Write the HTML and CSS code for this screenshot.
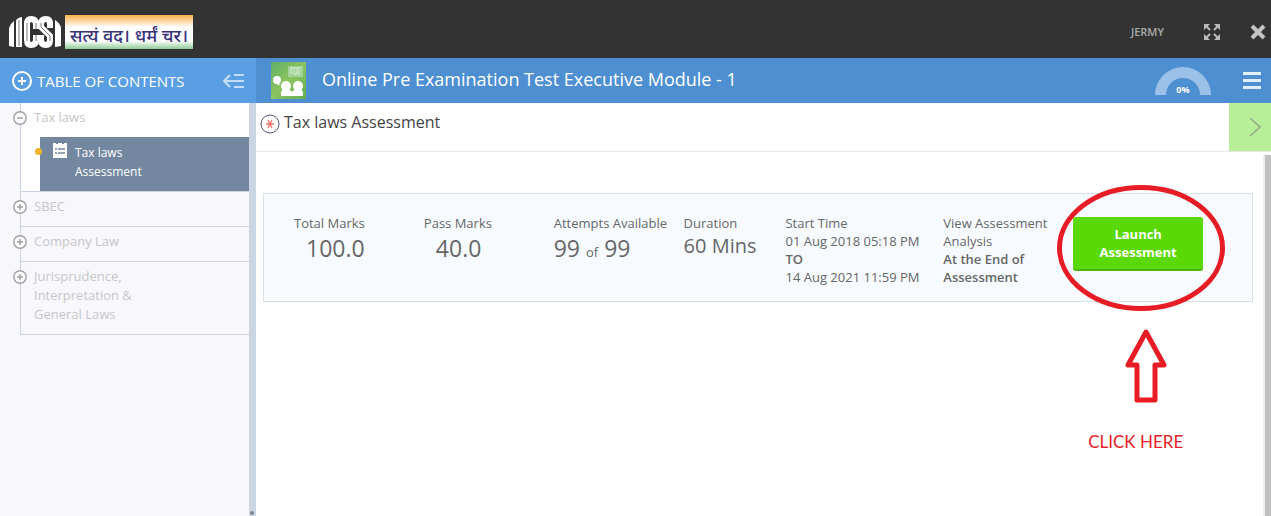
FILE: index.html
```html
<!DOCTYPE html>
<html lang="en">
<head>
    <meta charset="UTF-8">
    <meta name="viewport" content="width=device-width, initial-scale=1.0">
    <title>Online Pre Examination Test</title>
    <link rel="stylesheet" href="styles.css">
</head>
<body>
    <header class="topbar">
        <svg class="logo" viewBox="0 0 54 34" aria-hidden="true">
            <g fill="#fff">
                <path d="M1 13Q2 9 6 6V32L1 31Z"/>
                <path d="M8 5Q11 2 14 2V32H8Z"/>
                <path d="M47 5Q52 8 53 13V31L47 32Z"/>
            </g>
            <g fill="none" stroke="#fff" stroke-width="6">
                <path d="M28 14V9Q28 4 23 4Q19 4 19 9V25Q19 30 23 30Q28 30 28 25V20"/>
                <path d="M42 13V9Q42 4 38 4Q33 4 33 9V12L42 21V25Q42 30 38 30Q33 30 33 25V20"/>
            </g>
            <path fill="none" stroke="#777" d="M11 5V31M19 8V26M28 8V14M28 20V26M33 8V12L42 21V26"/>
        </svg>
        <span class="motto" lang="hi">सत्यं वद। धर्मं चर।</span>
        <span class="user">JERMY</span>
        <button class="icon-btn fullscreen" aria-label="Full screen">
            <svg width="16" height="16" viewBox="0 0 16 16" fill="#bbb" stroke="#bbb" stroke-width="2">
                <path stroke="none" d="M0 0H6L0 6Z M16 0V6L10 0Z M0 16V10L6 16Z M16 16H10L16 10Z"/>
                <path d="M2 2L6 6 M14 2L10 6 M2 14L6 10 M14 14L10 10"/>
            </svg>
        </button>
        <button class="icon-btn" aria-label="Close">
            <svg width="16" height="16" viewBox="0 0 16 16" stroke="#c4c4c4" stroke-width="4"><path d="M2 2L14 14 M14 2L2 14"/></svg>
        </button>
    </header>

    <div class="layout">
        <aside class="sidebar">
            <div class="toc-header">
                <svg width="20" height="20" viewBox="0 0 20 20" fill="none" stroke="#fff" stroke-width="2"><circle cx="10" cy="10" r="9"/><path d="M10 6V14 M6 10H14"/></svg>
                <h2>TABLE OF CONTENTS</h2>
                <button class="icon-btn" aria-label="Collapse contents">
                    <svg width="22" height="16" viewBox="0 0 22 16" fill="none" stroke="#c5ddf6" stroke-width="2"><path d="M11 2H21 M1 8H21 M11 14H21"/><path d="M7 2L1 8L7 14"/></svg>
                </button>
            </div>
            <ul class="toc">
                <li class="open">
                    <button class="toggle" aria-label="Collapse Tax laws">
                        <svg width="14" height="14" viewBox="0 0 14 14" fill="#fafafc" stroke="#a0a0a0" stroke-width="1.4"><circle cx="7" cy="7" r="6.2"/><path d="M4 7H10"/></svg>
                    </button>
                    <a href="#tax" class="topic">Tax laws</a>
                    <a href="#assessment" class="lesson">
                        <span class="dot"></span>
                        <svg width="14" height="15" viewBox="0 0 14 15"><path fill="#fff" d="M0 0H3V1H5V0H9V1H11V0H14V15H0Z"/><path stroke="#7388a0" stroke-width="1.6" d="M2 6H4 M5 6H12 M2 10H4 M5 10H12"/></svg>
                        <span class="lesson-name">Tax laws Assessment</span>
                    </a>
                </li>
                <li>
                    <button class="toggle" aria-label="Expand SBEC">
                        <svg width="14" height="14" viewBox="0 0 14 14" fill="#fafafc" stroke="#a0a0a0" stroke-width="1.4"><circle cx="7" cy="7" r="6.2"/><path d="M4 7H10 M7 4V10"/></svg>
                    </button>
                    <a href="#sbec" class="topic">SBEC</a>
                </li>
                <li>
                    <button class="toggle" aria-label="Expand Company Law">
                        <svg width="14" height="14" viewBox="0 0 14 14" fill="#fafafc" stroke="#a0a0a0" stroke-width="1.4"><circle cx="7" cy="7" r="6.2"/><path d="M4 7H10 M7 4V10"/></svg>
                    </button>
                    <a href="#company" class="topic">Company Law</a>
                </li>
                <li>
                    <button class="toggle" aria-label="Expand Jurisprudence">
                        <svg width="14" height="14" viewBox="0 0 14 14" fill="#fafafc" stroke="#a0a0a0" stroke-width="1.4"><circle cx="7" cy="7" r="6.2"/><path d="M4 7H10 M7 4V10"/></svg>
                    </button>
                    <a href="#general" class="topic">Jurisprudence, Interpretation &amp; General Laws</a>
                </li>
            </ul>
            <span class="grip"></span>
        </aside>

        <main class="content">
            <div class="course-bar">
                <svg class="course-icon" width="35" height="37" viewBox="0 0 35 37" aria-hidden="true">
                    <defs><linearGradient id="leaf" x1="0" y1="0" x2="1" y2="1"><stop offset="0" stop-color="#5fae68"/><stop offset="0.5" stop-color="#8cc45e"/><stop offset="1" stop-color="#62ac52"/></linearGradient></defs>
                    <path fill="url(#leaf)" d="M0 0H35V37H0Z"/>
                    <path fill="#a3d59a" d="M17 4H32V15H17Z"/>
                    <path fill="none" stroke="#d9efd2" d="M19 6H30 M20 6V12 M23 8V12H26V7 M28 8V13"/>
                    <g fill="#fff"><circle cx="6" cy="18" r="4"/><circle cx="15" cy="24" r="5"/><circle cx="27" cy="24" r="5"/><path d="M10 34V30Q11 27 15 27Q19 27 21 30V34Z M21 34V30Q23 27 27 27Q31 27 32 30V34Z M4 20L10 23L7 23Z"/></g>
                </svg>
                <h1>Online Pre Examination Test Executive Module - 1</h1>
                <div class="progress">
                    <svg width="56" height="28" viewBox="0 0 56 28"><path fill="#9cc1e9" d="M0 28A28 28 0 0 1 56 28H45A17 17 0 0 0 11 28Z"/></svg>
                    <span>0%</span>
                </div>
                <button class="icon-btn" aria-label="Menu">
                    <svg width="18" height="17" viewBox="0 0 18 17" fill="#e1eefb"><path d="M0 0H18V3H0Z M0 7H18V10H0Z M0 14H18V17H0Z"/></svg>
                </button>
            </div>
            <div class="page-title">
                <div class="heading">
                    <svg width="20" height="20" viewBox="0 0 20 20" fill="none"><circle cx="10" cy="10" r="9" stroke="#55556d"/><path stroke="#ee7365" stroke-width="1.3" d="M6 10H14 M8 6L12 14 M12 6L8 14"/></svg>
                    <h3>Tax laws Assessment</h3>
                </div>
                <button class="next" aria-label="Next">
                    <svg width="12" height="20" viewBox="0 0 12 20" fill="none" stroke="#93ab8a" stroke-width="1.6"><path d="M1 1L11 10L1 19"/></svg>
                </button>
            </div>
            <div class="scroll-area">
                <section class="summary">
                    <div class="item marks">Total Marks<span class="value">100.0</span></div>
                    <div class="item marks">Pass Marks<span class="value">40.0</span></div>
                    <div class="item">Attempts Available<span class="attempts">99 <small>of</small> 99</span></div>
                    <div class="item">Duration<span class="duration">60 Mins</span></div>
                    <div class="item">Start Time<br>01 Aug 2018 05:18 PM<br><b>TO</b><br>14 Aug 2021 11:59 PM</div>
                    <div class="item">View Assessment Analysis<br><b>At the End of Assessment</b></div>
                    <div class="action">
                        <button class="launch">Launch Assessment</button>
                        <div class="callout">
                            <svg width="168" height="218" viewBox="0 0 168 218" fill="none" stroke="#e81c24">
                                <ellipse cx="84" cy="63" rx="81.5" ry="60.5" stroke-width="5"/>
                                <path stroke-width="5" stroke-linejoin="round" d="M89 147L71 180H80V215H98V180H107Z"/>
                            </svg>
                            <p>CLICK HERE</p>
                        </div>
                    </div>
                </section>
                <div class="scrollbar"></div>
            </div>
        </main>
    </div>
</body>
</html>
```

FILE: styles.css
```css
* {
    box-sizing: border-box;
}
body {
    margin: 0;
    min-height: 100vh;
    display: flex;
    flex-direction: column;
    font-family: "Open Sans", "Noto Sans", sans-serif;
    font-size: 13px;
    line-height: 18px;
    color: #666;
    background: #fff;
}
h1, h2, h3, p, ul {
    margin: 0;
    padding: 0;
    font-weight: 400;
}
b {
    font-weight: 600;
}
button {
    font-family: inherit;
    border: none;
    padding: 0;
    cursor: pointer;
}
svg {
    display: block;
    flex: none;
}
a {
    text-decoration: none;
}
.icon-btn {
    background: none;
}
.topbar {
    display: flex;
    align-items: center;
    height: 58px;
    padding: 6px 5px 0 8px;
    background: #333;
}
.logo {
    width: 54px;
    height: 34px;
    margin-right: 3px;
}
.motto {
    width: 128px;
    height: 34px;
    font-size: 18px;
    font-weight: 500;
    line-height: 40px;
    text-align: center;
    white-space: nowrap;
    color: #39327c;
    background: linear-gradient(#f6b14b, #fff 36%, #fff 76%, #8fca98);
}
.user {
    margin-left: auto;
    margin-right: 40px;
    font-size: 11px;
    font-weight: 600;
    color: #aaa;
}
.fullscreen {
    margin-right: 30px;
}
.layout {
    display: flex;
    flex: 1;
}
.sidebar {
    position: relative;
    flex: none;
    width: 256px;
    background: #f8f8fc;
    border-right: 7px solid #cad6e3;
}
.grip {
    position: absolute;
    right: -5px;
    bottom: 1px;
    width: 4px;
    height: 4px;
    border-radius: 50%;
    background: #7b8794;
}
.toc-header {
    display: flex;
    align-items: center;
    width: 256px;
    height: 45px;
    padding: 0 11px 0 12px;
    color: #fff;
    background: #5a9fe3;
}
.toc-header h2 {
    margin-left: 5px;
    margin-right: auto;
    font-size: 15px;
}
.toc {
    margin-left: 20px;
    list-style: none;
    border-left: 1px solid #cad3e0;
}
.toc li {
    position: relative;
    min-height: 35px;
    padding: 5px 0 10px 13px;
    border-bottom: 1px solid #cad3e0;
}
.toc .open {
    padding-bottom: 0;
    background: #fff;
}
.toggle {
    position: absolute;
    left: -8px;
    top: 8px;
    background: none;
}
.topic {
    display: block;
    width: 110px;
    line-height: 19px;
    color: #c6c6c9;
}
.lesson {
    position: relative;
    display: flex;
    gap: 8px;
    height: 54px;
    margin-top: 10px;
    margin-left: 6px;
    padding: 6px 13px;
    font-size: 12px;
    line-height: 19px;
    color: #fff;
    background: #7388a0;
}
.lesson-name {
    width: 80px;
}
.dot {
    position: absolute;
    left: -5px;
    top: 11px;
    width: 7px;
    height: 7px;
    border-radius: 50%;
    background: #f3b229;
}
.content {
    flex: 1;
    display: flex;
    flex-direction: column;
    min-width: 0;
}
.course-bar {
    display: flex;
    align-items: center;
    height: 45px;
    padding: 0 10px 0 15px;
    color: #fff;
    background: #4e8fd1;
}
.course-bar h1 {
    margin-left: 16px;
    margin-right: auto;
    padding-bottom: 3px;
    font-size: 18px;
}
.progress {
    position: relative;
    margin-right: 32px;
}
.progress span {
    position: absolute;
    left: 0;
    right: 0;
    bottom: -4px;
    font-size: 9px;
    font-weight: 700;
    text-align: center;
}
.page-title {
    display: flex;
    justify-content: space-between;
    height: 49px;
    padding-left: 4px;
    border-bottom: 1px solid #e8e8e8;
}
.heading {
    display: flex;
    align-items: flex-end;
    gap: 4px;
    height: 31px;
}
.heading h3 {
    padding-bottom: 3px;
    font-size: 16px;
    color: #444;
}
.next {
    display: flex;
    align-items: center;
    justify-content: flex-end;
    width: 42px;
    padding-right: 10px;
    background: #b9ee99;
}
.scroll-area {
    flex: 1;
    display: flex;
    align-items: flex-start;
    padding-left: 7px;
}
.scrollbar {
    align-self: stretch;
    width: 8px;
    margin-top: 3px;
    margin-left: 10px;
    border-left: 2px solid #eee;
    background: #c0c0c0;
}
.summary {
    flex: 1;
    display: grid;
    grid-template-columns: 130fr 130fr 130fr 102fr 158fr 130fr 179fr;
    min-height: 109px;
    margin-top: 41px;
    padding: 20px 0 14px 30px;
    border: 1px solid #d5e2ea;
    background: #f7fbff;
}
.value, .attempts, .duration {
    display: block;
    font-size: 23px;
    line-height: 32px;
}
.marks .value {
    padding-left: 12px;
}
.attempts small {
    font-size: 13px;
}
.duration {
    font-size: 20px;
    line-height: 28px;
}
.action {
    position: relative;
    padding-top: 3px;
}
.launch {
    width: 130px;
    height: 54px;
    font-size: 13px;
    font-weight: 700;
    line-height: 18px;
    padding: 0 24px;
    color: #fff;
    background: #5ad907;
    border-bottom: 2px solid #4bb70a;
    border-radius: 3px;
}
.callout {
    position: absolute;
    left: -16px;
    top: -29px;
    pointer-events: none;
}
.callout p {
    margin-top: 30px;
    padding-left: 31px;
    font-family: Lato, sans-serif;
    font-size: 17px;
    color: #e81c24;
}
```
